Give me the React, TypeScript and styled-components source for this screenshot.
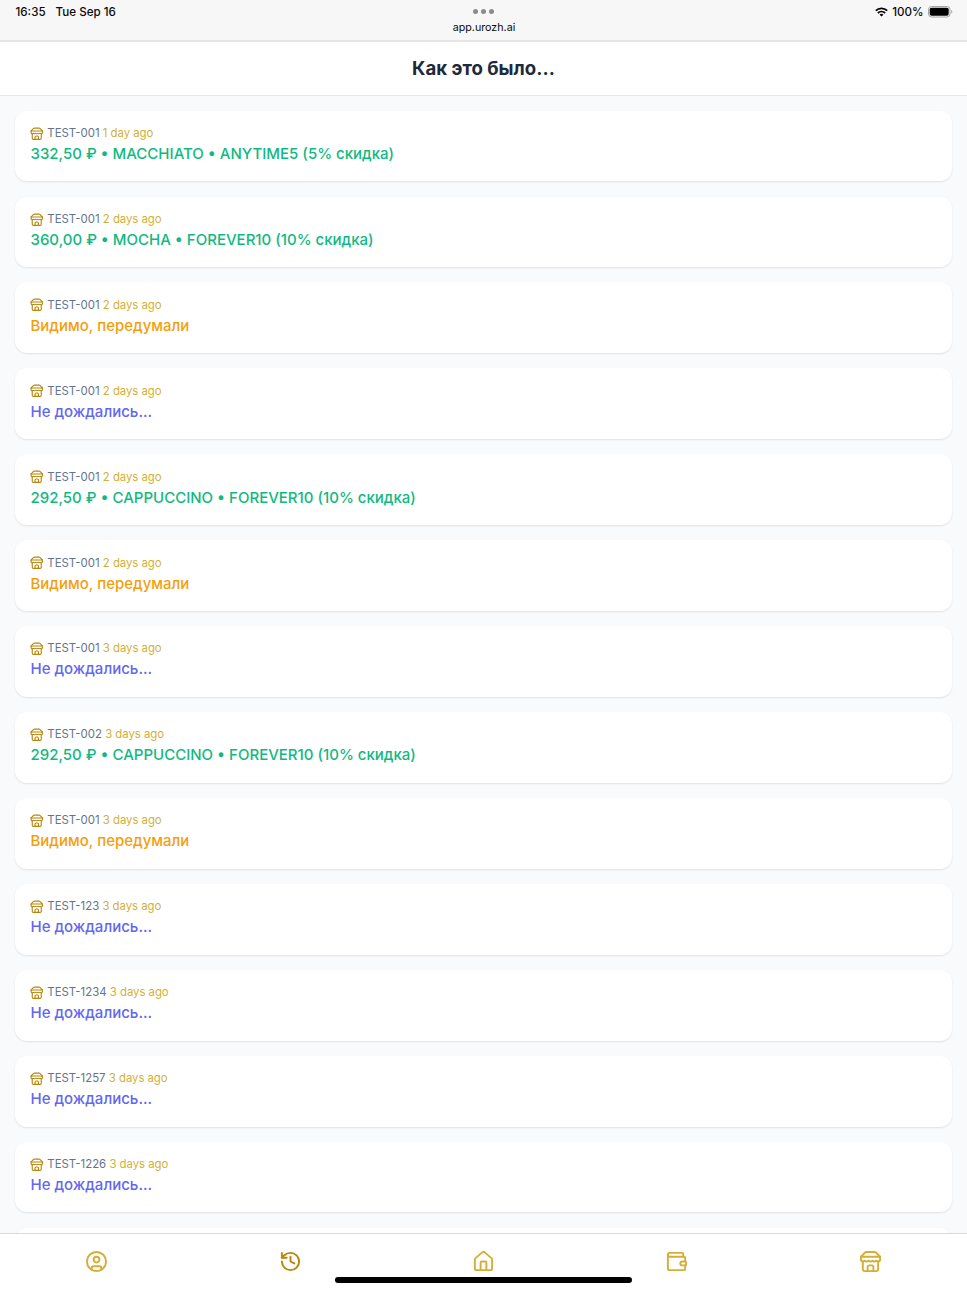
import React from "react";
import styled, { createGlobalStyle } from "styled-components";
import { CircleUser, History, House, Wallet } from "lucide-react";

const GlobalStyle = createGlobalStyle`
  * { box-sizing: border-box; }
  body {
    margin: 0;
    background: #f8fafc;
    font-family: Inter, "Liberation Sans", sans-serif;
  }
`;

const Screen = styled.div`
  display: flex;
  flex-direction: column;
  height: 1290px;
  overflow: hidden;
`;

const StatusBar = styled.div`
  flex: none;
  display: grid;
  grid-template-columns: 1fr auto 1fr;
  height: 42px;
  padding: 5px 14.5px 0 15.5px;
  background: #f7f7f7;
  border-bottom: 2px solid #e6e6e6;
  color: #0a0a0a;
  font-size: 11.6px;
  font-weight: 500;
  line-height: 15px;
`;

const Clock = styled.div`
  display: flex;
  gap: 10px;
`;

const Address = styled.div`
  display: flex;
  flex-direction: column;
  align-items: center;
  gap: 6px;
  padding-top: 4px;
  font-size: 10.7px;
  font-weight: 400;
`;

const Dots = styled.div`
  display: flex;
  gap: 3px;
`;

const Dot = styled.i`
  width: 5px;
  height: 5px;
  border-radius: 50%;
  background: #8c8c8c;
`;

const Indicators = styled.div`
  display: flex;
  justify-content: flex-end;
  align-items: flex-start;
  gap: 4px;
`;

const WifiGlyph = styled.svg`
  width: 13px;
  height: 10px;
  margin-top: 2px;
`;

const BatteryGlyph = styled.svg`
  width: 25px;
  height: 12px;
  margin-top: 1px;
`;

const Header = styled.header`
  flex: none;
  display: flex;
  align-items: center;
  justify-content: center;
  height: 54px;
  padding-bottom: 1px;
  background: #fff;
  border-bottom: 1px solid #e2e8f0;
`;

const Title = styled.h1`
  margin: 0;
  color: #1e293b;
  font-size: 18.6px;
  font-weight: 700;
  line-height: 27px;
`;

const Feed = styled.main`
  flex: 1;
  min-height: 0;
  overflow: hidden;
  display: flex;
  flex-direction: column;
  gap: 15.13px;
  padding: 14.6px 15px 0;
`;

const Card = styled.article`
  flex: none;
  height: 70.8px;
  padding: 15.3px 15.5px;
  border-radius: 12px;
  background: #fff;
  box-shadow: 0 1px 2px rgba(0, 0, 0, 0.1);
`;

const Meta = styled.div`
  display: flex;
  align-items: center;
  gap: 3.3px;
  height: 15px;
  color: #64748b;
  font-size: 11.4px;
  line-height: 15px;
`;

const Ago = styled.span`
  color: #d4af37;
  letter-spacing: -0.05px;
`;

type Kind = "paid" | "cancelled" | "expired";

const tones: Record<Kind, string> = {
  paid: "#10b981",
  cancelled: "#f59e0b",
  expired: "#6366f1",
};

const Summary = styled.div<{ $kind: Kind }>`
  margin-top: 2px;
  color: ${(p) => tones[p.$kind]};
  font-size: 15px;
  font-weight: 500;
  line-height: 22px;
`;

const StoreSvg = styled.svg<{ $size: number }>`
  flex: none;
  width: ${(p) => p.$size}px;
  height: ${(p) => p.$size}px;
  fill: none;
  stroke: currentColor;
  stroke-width: 2;
  stroke-linecap: round;
  stroke-linejoin: round;
`;

const ShopMark = styled.span`
  display: flex;
  margin: 0 0.5px 0 -0.5px;
  color: #b8860b;
`;

function StoreIcon({ size }: { size: number }) {
  return (
    <StoreSvg $size={size} viewBox="0 0 24 24">
      <path d="m2 7 4.41-4.41A2 2 0 0 1 7.83 2h8.34a2 2 0 0 1 1.42.59L22 7" />
      <path d="M4 12v8a2 2 0 0 0 2 2h12a2 2 0 0 0 2-2v-8" />
      <path d="M15 22v-4a2 2 0 0 0-2-2h-2a2 2 0 0 0-2 2v4" />
      <path d="M2 7h20" />
      <path d="M22 7v3a2 2 0 0 1-2 2a2.7 2.7 0 0 1-1.59-.63.7.7 0 0 0-.82 0A2.7 2.7 0 0 1 16 12a2.7 2.7 0 0 1-1.59-.63.7.7 0 0 0-.82 0A2.7 2.7 0 0 1 12 12a2.7 2.7 0 0 1-1.59-.63.7.7 0 0 0-.82 0A2.7 2.7 0 0 1 8 12a2.7 2.7 0 0 1-1.59-.63.7.7 0 0 0-.82 0A2.7 2.7 0 0 1 4 12a2 2 0 0 1-2-2V7" />
    </StoreSvg>
  );
}

const TabBar = styled.nav`
  flex: none;
  position: relative;
  display: grid;
  grid-template-columns: repeat(5, 1fr);
  height: 57px;
  padding-top: 16px;
  background: #fff;
  border-top: 1px solid #d9dadd;
`;

const Tab = styled.div<{ $active?: boolean }>`
  display: flex;
  justify-content: center;
  color: ${(p) => (p.$active ? "#b8860b" : "#d4af37")};
`;

const HomeIndicator = styled.div`
  position: absolute;
  left: 335px;
  bottom: 7px;
  width: 297px;
  height: 6px;
  border-radius: 3px;
  background: #000;
`;

type Entry = { shop: string; ago: string; kind: Kind; text: string };

const cancelled = "Видимо, передумали";
const expired = "Не дождались...";

const entries: Entry[] = [
  { shop: "TEST-001", ago: "1 day ago", kind: "paid", text: "332,50 ₽ • MACCHIATO • ANYTIME5 (5% скидка)" },
  { shop: "TEST-001", ago: "2 days ago", kind: "paid", text: "360,00 ₽ • MOCHA • FOREVER10 (10% скидка)" },
  { shop: "TEST-001", ago: "2 days ago", kind: "cancelled", text: cancelled },
  { shop: "TEST-001", ago: "2 days ago", kind: "expired", text: expired },
  { shop: "TEST-001", ago: "2 days ago", kind: "paid", text: "292,50 ₽ • CAPPUCCINO • FOREVER10 (10% скидка)" },
  { shop: "TEST-001", ago: "2 days ago", kind: "cancelled", text: cancelled },
  { shop: "TEST-001", ago: "3 days ago", kind: "expired", text: expired },
  { shop: "TEST-002", ago: "3 days ago", kind: "paid", text: "292,50 ₽ • CAPPUCCINO • FOREVER10 (10% скидка)" },
  { shop: "TEST-001", ago: "3 days ago", kind: "cancelled", text: cancelled },
  { shop: "TEST-123", ago: "3 days ago", kind: "expired", text: expired },
  { shop: "TEST-1234", ago: "3 days ago", kind: "expired", text: expired },
  { shop: "TEST-1257", ago: "3 days ago", kind: "expired", text: expired },
  { shop: "TEST-1226", ago: "3 days ago", kind: "expired", text: expired },
];

export default function App() {
  return (
    <Screen>
      <GlobalStyle />
      <StatusBar>
        <Clock>
          <span>16:35</span>
          <span>Tue Sep 16</span>
        </Clock>
        <Address>
          <Dots><Dot /><Dot /><Dot /></Dots>
          <span>app.urozh.ai</span>
        </Address>
        <Indicators>
          <WifiGlyph viewBox="0 0 13 10" fill="none" stroke="#000" strokeWidth="1.8">
            <path d="M.8 3.7a8.2 8.2 0 0 1 11.4 0M2.9 6a5.2 5.2 0 0 1 7.2 0" />
            <path d="M6.5 9.6 4.6 7.7a2.8 2.8 0 0 1 3.8 0z" fill="#000" stroke="none" />
          </WifiGlyph>
          <span>100%</span>
          <BatteryGlyph viewBox="0 0 25 12">
            <rect x=".5" y=".5" width="21.5" height="10.5" rx="3" fill="none" stroke="#a5a5a5" />
            <rect x="1.7" y="1.7" width="19" height="8" rx="1.8" />
            <path d="M23.2 4v3.6a2 2 0 0 0 0-3.6z" fill="#a5a5a5" />
          </BatteryGlyph>
        </Indicators>
      </StatusBar>
      <Header>
        <Title>Как это было...</Title>
      </Header>
      <Feed>
        {entries.map((e, i) => (
          <Card key={i}>
            <Meta>
              <ShopMark><StoreIcon size={13.5} /></ShopMark>
              <span>{e.shop}</span>
              <Ago>{e.ago}</Ago>
            </Meta>
            <Summary $kind={e.kind}>{e.text}</Summary>
          </Card>
        ))}
        <Card />
      </Feed>
      <TabBar>
        <Tab><CircleUser size={23} /></Tab>
        <Tab $active><History size={23} /></Tab>
        <Tab><House size={23} /></Tab>
        <Tab><Wallet size={23} /></Tab>
        <Tab><StoreIcon size={23} /></Tab>
        <HomeIndicator />
      </TabBar>
    </Screen>
  );
}
